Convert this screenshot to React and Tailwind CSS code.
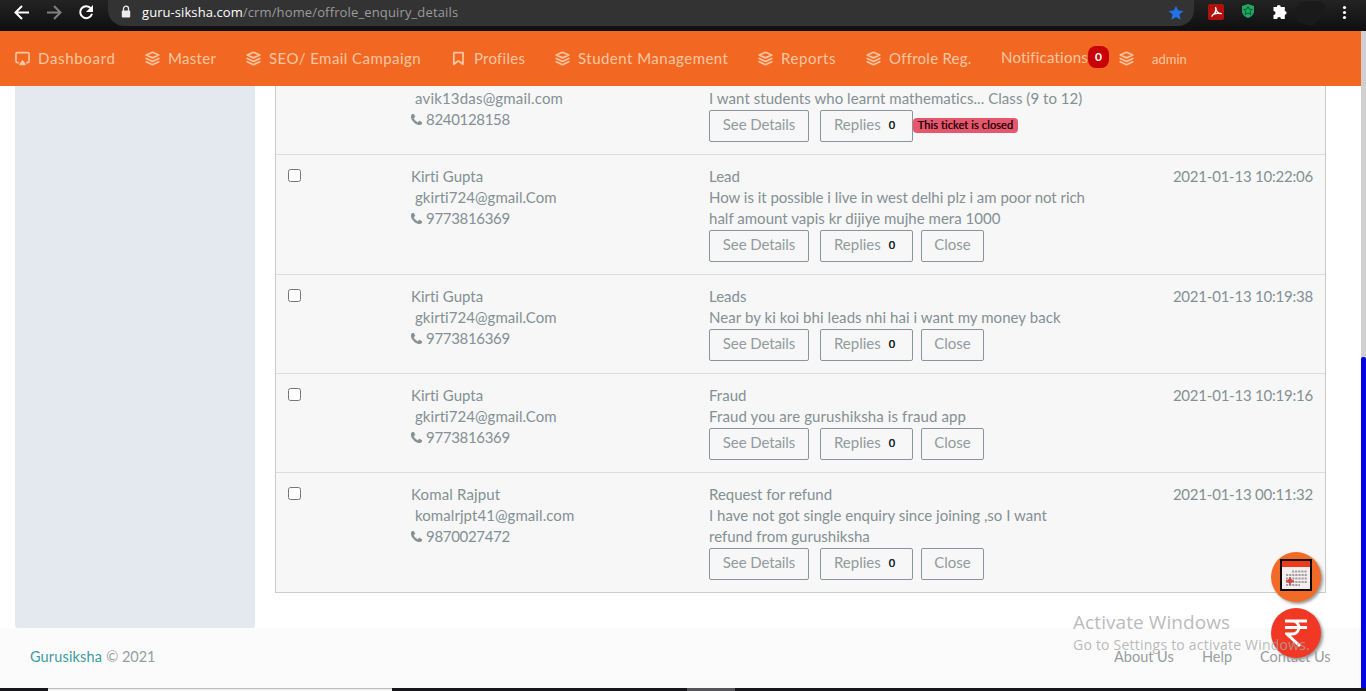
import React from "react";

function Layers({ className = "" }) {
  return (
    <svg viewBox="0 0 24 24" className={`h-[15px] w-[15px] shrink-0 ${className}`} fill="none" stroke="currentColor" strokeWidth="2.700" strokeLinejoin="round" strokeLinecap="round">
      <path d="M12 2 22 6.500 12 11 2 6.500Z" />
      <path d="m2 12 10 4.800L22 12" />
      <path d="m2 17.200 10 4.800 10-4.800" />
    </svg>
  );
}

function Airplay({ className = "" }) {
  return (
    <svg viewBox="0 0 24 24" className={`h-[15px] w-[15px] shrink-0 ${className}`} fill="none" stroke="currentColor" strokeWidth="2.600" strokeLinejoin="round">
      <path d="M6 18.500H3.500Q1.500 18.500 1.500 16.500V4.500Q1.500 2.500 3.500 2.500H20.500Q22.500 2.500 22.500 4.500V16.500Q22.500 18.500 20.500 18.500H18" />
      <path d="m12 16 4 5.500H8Z" fill="currentColor" />
    </svg>
  );
}

function Bookmark({ className = "" }) {
  return (
    <svg viewBox="0 0 15 15" className={`h-[15px] w-[15px] shrink-0 ${className}`} fill="none" stroke="currentColor" strokeWidth="1.700" strokeLinejoin="round">
      <path d="M2.800 1.700h9.200v11.600L7.400 9.800 2.800 13.300Z" />
    </svg>
  );
}

function Phone() {
  return (
    <svg viewBox="0 128 1408 1408" className="h-[11px] w-[11px] shrink-0" fill="currentColor" stroke="currentColor" strokeWidth="50">
      <path d="M1408 1240q0 27-10 70.500t-21 68.500q-21 50-122 106-94 51-186 51-27 0-53-3.500t-57.500-12.500-47-14.500-55.500-20.500-49-18q-98-35-175-83-127-79-264-216t-216-264q-48-77-83-175-3-9-18-49t-20.500-55.500-14.500-47-12.500-57.500-3.500-53q0-92 51-186 56-101 106-122 25-11 68.500-21t70.500-10q14 0 21 3 18 6 53 76 11 19 30 54t35 63.500 31 53.500q3 4 17.500 25t21.500 35.500 7 28.500q0 20-28.500 50t-62 55-62 53-28.500 46q0 9 5 22.500t8.500 20.500 14 24 11.500 19q76 137 174 235t235 174q2 1 19 11.500t24 14 20.500 8.500 22.500 5q18 0 46-28.500t53-62 55-62 50-28.500q14 0 28.500 7t35.500 21.500 25 17.500q25 15 53.500 31t63.500 35 54 30q70 35 76 53 3 7 3 21z" />
    </svg>
  );
}

function BrowserBar() {
  return (
    <div className="flex h-[31px] items-start bg-gradient-to-b from-[#232323] to-[#100f0f] text-white">
      <svg viewBox="0 0 108 26" className="h-[26px] w-[108px] shrink-0" fill="none" strokeWidth="2">
        <path d="M29 12.500H16M22 6l-6.500 6.500L22 19" stroke="#fff" />
        <path d="M47 12.500h13M54 6l6.500 6.500L54 19" stroke="#808080" />
        <path d="M91 8.500A6 6 0 1 0 92 13.800" stroke="#fff" />
        <path d="M93 5v7h-7Z" fill="#fff" />
      </svg>
      <div className="flex h-[26px] w-[1086px] items-center rounded-b-[16px] bg-[#333333] pr-[10px] pl-[13px]">
        <svg viewBox="0 0 10 14" className="-mt-[2px] h-[14px] w-[10px]">
          <path d="M2.500 6V3.700a2.500 2.500 0 0 1 5 0V6" fill="none" stroke="#ececec" strokeWidth="1.300" />
          <rect x="0.800" y="5.500" width="8.400" height="7" rx="1" fill="#ececec" />
        </svg>
        <div className="-mt-[2px] ml-[11px] flex-1 font-['Open_Sans','Noto_Sans',sans-serif] text-[13px] leading-[24px] whitespace-nowrap text-[#9b9b9b]">
          <span className="tracking-[0.07px] text-white">guru-siksha.com</span>
          <span className="tracking-[0.14px]">/crm/home/offrole_enquiry_details</span>
        </div>
        <svg viewBox="0 0 24 24" className="-mt-[1px] h-[16px] w-[16px]" fill="#2173e8">
          <path d="m12 1 3.200 7.400 8 .7-6 5.300 1.800 7.900-7-4.200-7 4.200 1.800-7.900-6-5.300 8-.7Z" />
        </svg>
      </div>
      <svg viewBox="0 0 172 31" className="h-[31px] w-[172px]">
        <rect x="14" y="4" width="16" height="16" rx="2" fill="#b1100c" />
        <path d="M21.500 7c1.500 4-1 7-4 9.500M21.800 8c.4 4 3 5.500 6 5.700M18 15.500c2.500-2.500 5-2.800 8.500-1.800" fill="none" stroke="#fff" strokeWidth="1.300" />
        <path d="m54 4 6 2v5.500c0 3-3 5.300-6 6.500-3-1.200-6-3.500-6-6.500V6Z" fill="#1fa861" />
        <path d="m54 6.500 1.300 2.700 3 .3-2.200 2 .7 3-2.800-1.500-2.800 1.500.7-3-2.200-2 3-.3Z" fill="none" stroke="#0b5932" strokeWidth="1" />
        <path d="M79 8h3.300a2 2 0 1 1 4 0h4v4a1.800 1.800 0 1 1 0 3.700V20h-3.800a1.900 1.900 0 1 0-3.800 0H79v-4a2 2 0 1 0 0-4Z" transform="translate(0.500,-1)" fill="#fff" />
        <path d="m106 2 18-1 7 3-2 11-11 11-14-4-4-9Z" fill="#1a1a1b" />
        <g fill="#fff">
          <circle cx="150.500" cy="7.500" r="1.600" />
          <circle cx="150.500" cy="12.500" r="1.600" />
          <circle cx="150.500" cy="17.500" r="1.600" />
        </g>
      </svg>
    </div>
  );
}

const links = [
  { Icon: Airplay, label: "Dashboard", width: "w-[130px]", track: "tracking-[0.68px]" },
  { Icon: Layers, label: "Master", width: "w-[101px]", track: "tracking-[0.3px]" },
  { Icon: Layers, label: "SEO/ Email Campaign", width: "w-[205px]", track: "tracking-[0.44px]" },
  { Icon: Bookmark, label: "Profiles", width: "w-[104px]", track: "tracking-[0.25px]" },
  { Icon: Layers, label: "Student Management", width: "w-[203px]", track: "tracking-[0.48px]" },
  { Icon: Layers, label: "Reports", width: "w-[108px]", track: "tracking-[0.55px]" },
  { Icon: Layers, label: "Offrole Reg.", width: "w-[134px]", track: "tracking-[0.25px]" },
];

function NavBar() {
  return (
    <nav className="flex h-[55px] shrink-0 items-center bg-[#f26722] pl-[15px] text-[15px] whitespace-nowrap text-[#fbc7a2]">
      {links.map(({ Icon, label, width, track }) => (
        <a key={label} className={`flex shrink-0 items-center gap-2 ${width} ${track}`}>
          <Icon />
          {label}
        </a>
      ))}
      <span className="-mt-[3px] ml-[1px] w-[87px] tracking-[0.2px]">Notifications</span>
      <span className="-mt-[3px] flex h-[22px] w-[21px] items-center justify-center rounded-[8px] bg-[#c90205] text-[12px] font-bold text-white">0</span>
      <Layers className="ml-[10px]" />
      <span className="mt-[2px] ml-[18px] text-[13px]">admin</span>
    </nav>
  );
}

const kirti = { name: "Kirti Gupta", email: "gkirti724@gmail.Com", emailTrack: "tracking-[0.05px]", phone: "9773816369" };
const tickets = [
  {
    email: "avik13das@gmail.com",
    emailTrack: "tracking-[0.18px]",
    phone: "8240128158",
    lines: [["I want students who learnt mathematics... Class (9 to 12)", "tracking-[0.05px]"]],
    closed: true,
  },
  {
    ...kirti,
    subject: "Lead",
    lines: [
      ["How is it possible i live in west delhi plz i am poor not rich", "tracking-[-0.03px]"],
      ["half amount vapis kr dijiye mujhe mera 1000", "tracking-[0.02px]"],
    ],
    date: "2021-01-13 10:22:06",
  },
  { ...kirti, subject: "Leads", lines: [["Near by ki koi bhi leads nhi hai i want my money back", "tracking-[0.06px]"]], date: "2021-01-13 10:19:38" },
  { ...kirti, subject: "Fraud", lines: [["Fraud you are gurushiksha is fraud app", "tracking-[0.12px]"]], date: "2021-01-13 10:19:16" },
  {
    name: "Komal Rajput",
    nameTrack: "tracking-[0.15px]",
    email: "komalrjpt41@gmail.com",
    emailTrack: "tracking-[0.07px]",
    phone: "9870027472",
    subject: "Request for refund",
    lines: [
      ["I have not got single enquiry since joining ,so I want", "tracking-[0.02px]"],
      ["refund from gurushiksha", ""],
    ],
    date: "2021-01-13 00:11:32",
  },
];

const button = "flex h-8 items-center justify-center rounded-[2px] border border-[#8b9599] pb-[4px] text-[15px] text-[#929b9f]";

function Ticket({ t }) {
  return (
    <div className={`grid grid-cols-[123px_298px_416px_1fr] pb-3 ${t.closed ? "pt-[2px]" : "border-t border-[#dcdddd] pt-[11px]"}`}>
      <div className="pl-3">
        {t.name && <input type="checkbox" className="mt-[3px] block h-[13px] w-[13px]" />}
      </div>
      <div className="pl-3">
        {t.name && <div className={t.nameTrack || ""}>{t.name}</div>}
        <div className={`pl-1 ${t.emailTrack}`}>{t.email}</div>
        <div className="flex items-center gap-1 tracking-[-0.32px]">
          <Phone />
          {t.phone}
        </div>
      </div>
      <div className="pl-3 whitespace-nowrap">
        {t.subject && <div>{t.subject}</div>}
        {t.lines.map(([line, track]) => (
          <div key={line} className={track}>{line}</div>
        ))}
        <div className="mt-px flex items-center">
          <button className={`w-[100px] tracking-[-0.1px] ${button}`}>See Details</button>
          <button className={`ml-[11px] w-[93px] gap-2 pr-[4px] ${button}`}>
            Replies <span className="mt-px text-[11px] font-medium text-[#20282b] [text-shadow:0_0_0.5px_#20282b]">0</span>
          </button>
          {t.closed ? (
            <span className="-mt-px h-[15px] w-[105px] rounded-[4px] bg-[#e6566c] text-center text-[11px] leading-[14px] tracking-[0.1px] text-[#2a0b10] [text-shadow:0_0_0.5px_#2a0b10]">This ticket is closed</span>
          ) : (
            <button className={`ml-2 w-[63px] ${button}`}>Close</button>
          )}
        </div>
      </div>
      <div className="pr-3 text-right tracking-[-0.22px] whitespace-nowrap">{t.date}</div>
    </div>
  );
}

function Calendar() {
  return (
    <svg viewBox="0 0 32 32" className="h-8 w-8">
      <rect x="1" y="1" width="30" height="30" fill="#f3efee" stroke="#0c0505" strokeWidth="2" />
      <path d="M2 2h28v6H2z" fill="#ec3b1b" />
      <path d="M12 12.500h15M6 16h21M6 19.500h21M6 23h21M6 26h14" stroke="#a3a09f" strokeWidth="2.200" strokeDasharray="2.200 .9" />
      <path d="M10 18v8M6 22h8" stroke="#d33c38" strokeWidth="1.500" />
      <circle cx="10" cy="22" r="2" fill="none" stroke="#d33c38" />
    </svg>
  );
}

function Rupee() {
  return (
    <svg viewBox="0 0 22 28" className="h-7 w-[22px]" fill="none" stroke="#fff" strokeWidth="3">
      <path d="M0 2h22M0 8.500h22M1 2h6c9 0 9 13 0 13H2l13 12" />
    </svg>
  );
}

export default function App() {
  return (
    <div className="relative flex h-[691px] w-[1366px] flex-col overflow-hidden bg-white font-[Lato,'Open_Sans',sans-serif] [font-variant-ligatures:none]">
      <BrowserBar />
      <div className="flex h-[657px]">
        <div className="flex w-[1361px] flex-col">
          <NavBar />
          <main className="flex h-[542px] pl-[15px]">
            <aside className="w-[240px] rounded-b-[3px] bg-[#e4e8ef]" />
            <section className="ml-5 h-[507px] w-[1051px] overflow-hidden border border-t-0 border-[#cacccc] bg-[#f7f7f7] text-[15px] leading-[21px] text-[#849094]">
              {tickets.map((t, i) => (
                <Ticket key={i} t={t} />
              ))}
            </section>
          </main>
          <footer className="flex flex-1 items-center bg-[#fbfbfb] pr-[30px] pb-[2px] pl-[30px] text-[14.500px] text-[#979da2]">
            <span className="tracking-[0.15px] text-[#3c9b9f]">Gurusiksha</span>
            <span className="ml-1 flex-1">© 2021</span>
            <a className="w-[88px]">About Us</a>
            <a className="w-[58px]">Help</a>
            <a className="w-[71px] whitespace-nowrap">Contact Us</a>
          </footer>
        </div>
        <div className="flex w-[5px] flex-col bg-[#d0d0d0]">
          <div className="mt-[326px] flex-1 rounded-t-[2px] bg-[#0303e8]" />
        </div>
      </div>
      <div className="flex h-[3px] bg-[#17161b]">
        <div className="ml-12 w-[344px] border-t border-[#bbbbbb] bg-[#f4f4f4]" />
        <div className="ml-[295px] w-12 bg-[#56565a]" />
      </div>

      <div className="absolute top-[552px] left-[1271px] flex flex-col gap-[6px]">
        <div className="flex h-[50px] w-[50px] items-center justify-center rounded-full bg-[#f26a25] pb-1 shadow-[2px_2px_3px_#999]">
          <Calendar />
        </div>
        <div className="flex h-[50px] w-[50px] items-center justify-center rounded-full bg-[#f03824] shadow-[2px_2px_3px_#999]">
          <Rupee />
        </div>
      </div>
      <div className="absolute top-[609px] left-[1073px] font-['Open_Sans','Noto_Sans',sans-serif] whitespace-nowrap text-[#a9a9a9]/80">
        <div className="text-[19px] leading-[26px] tracking-[0.08px]">Activate Windows</div>
        <div className="text-[14px] leading-[20px] tracking-[0.22px]">Go to Settings to activate Windows.</div>
      </div>
    </div>
  );
}
